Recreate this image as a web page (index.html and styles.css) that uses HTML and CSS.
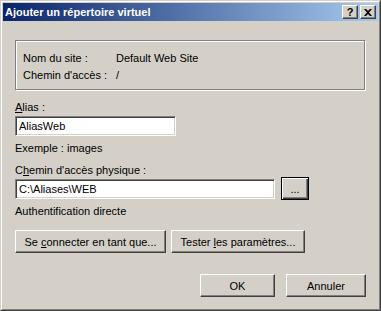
FILE: index.html
```html
<html>
<head>
    <meta charset="UTF-8">
    <title>Ajouter un répertoire virtuel</title>
    <link rel="stylesheet" href="styles.css">
</head>
<body>
<div class="window">
    <div class="frame">
        <div class="titlebar">
            <span class="title">Ajouter un répertoire virtuel</span>
            <div class="caption_btns">
                <span class="cbtn help">?</span>
                <span class="cbtn close">
                    <svg width="8" height="7" viewBox="0 0 8 7"><path d="M0 0h2l2 2 2-2h2L5 3.5 8 7H6L4 5 2 7H0l3-3.5z" fill="#000"/></svg>
                </span>
            </div>
        </div>
        <div class="content">
            <div class="groupbox">
                <div class="info_row"><span class="info_label">Nom du site :</span><span>Default Web Site</span></div>
                <div class="info_row"><span class="info_label">Chemin d'accès :</span><span>/</span></div>
            </div>
            <div class="label first"><u>A</u>lias :</div>
            <div class="textbox alias">AliasWeb</div>
            <div class="label hint">Exemple : images</div>
            <div class="label path_label">C<u>h</u>emin d'accès physique :</div>
            <div class="path_row">
                <div class="textbox path">C:\Aliases\WEB</div>
                <div class="btn browse"><span>...</span></div>
            </div>
            <div class="label auth">Authentification directe</div>
            <div class="btn_row">
                <div class="btn connect"><span>Se <u>c</u>onnecter en tant que...</span></div>
                <div class="btn test"><span>Tester <u>l</u>es paramètres...</span></div>
            </div>
            <div class="footer">
                <div class="btn ok"><span>OK</span></div>
                <div class="btn cancel"><span>Annuler</span></div>
            </div>
        </div>
    </div>
</div>
</body>
</html>
```

FILE: styles.css
```css
* {
    margin: 0;
    padding: 0;
    box-sizing: border-box;
}

body {
    background: #d4d0c8;
    font-family: "Liberation Sans", Arial, sans-serif;
    font-size: 11px;
    color: #000;
}

.window {
    width: 381px;
    height: 311px;
    border: 1px solid;
    border-color: #d4d0c8 #404040 #404040 #d4d0c8;
}

.frame {
    height: 100%;
    border: 1px solid;
    border-color: #fff #808080 #808080 #fff;
    padding: 1px;
}

.titlebar {
    height: 18px;
    display: flex;
    align-items: center;
    justify-content: space-between;
    padding: 0 2px 0 2px;
    background: linear-gradient(to right, #0a246a, #a6caf0);
}

.title {
    color: #fff;
    font-weight: bold;
    font-size: 11px;
}

.caption_btns {
    display: flex;
    gap: 2px;
}

.cbtn {
    width: 16px;
    height: 14px;
    display: flex;
    align-items: center;
    justify-content: center;
    background: #d4d0c8;
    border: 1px solid;
    border-color: #fff #404040 #404040 #fff;
    box-shadow: inset -1px -1px #808080;
    font-weight: bold;
    font-size: 11px;
    line-height: 1;
}

.content {
    padding: 19px 0 0 12px;
}

.groupbox {
    width: 350px;
    height: 50px;
    border: 1px solid #808080;
    box-shadow: inset 1px 1px 0 #fff, 1px 1px 0 #fff;
    padding: 9px 0 0 7px;
}

.info_row {
    display: flex;
    line-height: 16px;
    margin-bottom: 1px;
}

.info_label {
    width: 93px;
}

.label {
    line-height: 13px;
}

.label.first {
    margin-top: 11px;
}

.textbox {
    height: 20px;
    background: #fff;
    border: 1px solid;
    border-color: #808080 #fff #fff #808080;
    box-shadow: inset 1px 1px #404040, inset -1px -1px #d4d0c8;
    padding: 0 3px;
    line-height: 18px;
}

.alias {
    width: 161px;
    margin-top: 2px;
}

.hint {
    margin-top: 6px;
}

.path_label {
    margin-top: 9px;
}

.path_row {
    display: flex;
    align-items: center;
    gap: 6px;
}

.path {
    width: 260px;
}

.btn {
    height: 23px;
    display: flex;
    align-items: center;
    justify-content: center;
    border: 1px solid;
    border-color: #fff #404040 #404040 #fff;
    box-shadow: inset -1px -1px #808080;
}

.browse {
    width: 28px;
    border: 1px solid #000;
    box-shadow: inset 1px 1px #fff, inset -1px -1px #404040, inset -2px -2px #808080;
}

.auth {
    margin-top: 5px;
}

.btn_row {
    display: flex;
    gap: 5px;
    margin-top: 12px;
}

.connect {
    width: 151px;
}

.test {
    width: 134px;
}

.footer {
    display: flex;
    gap: 11px;
    margin-top: 21px;
    padding-left: 185px;
}

.ok {
    width: 75px;
}

.cancel {
    width: 80px;
}
```
